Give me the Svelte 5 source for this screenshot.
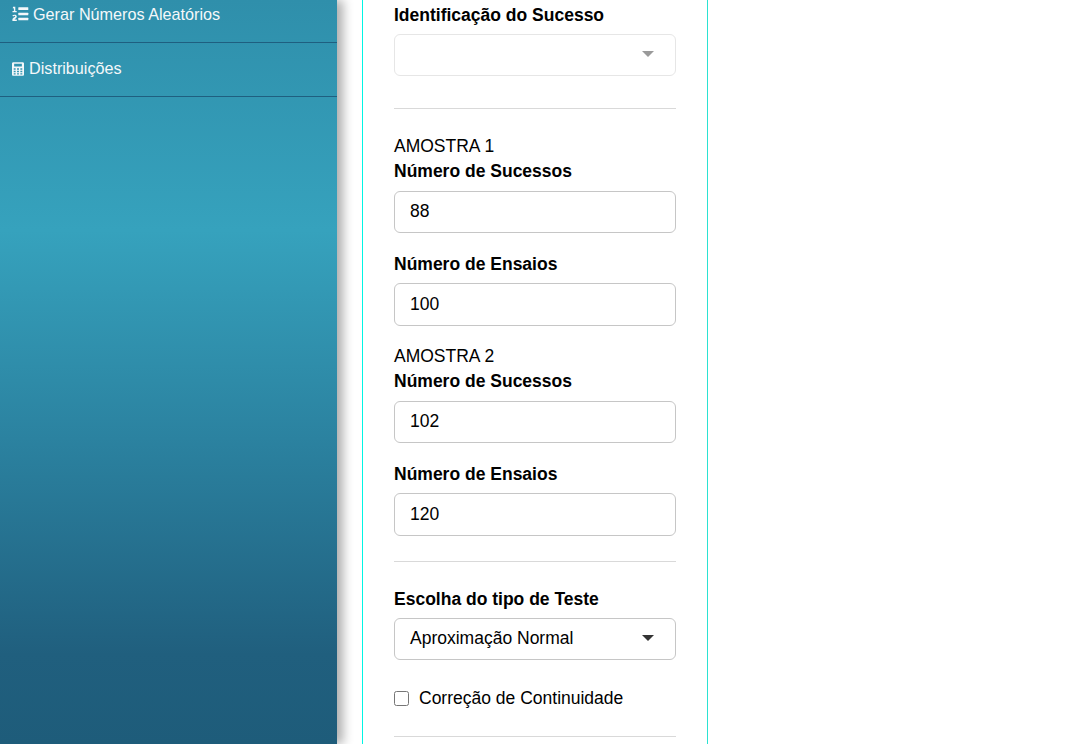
<script>
  const groups = [
    { title: 'AMOSTRA 1', a: '88', b: '100' },
    { title: 'AMOSTRA 2', a: '102', b: '120' }
  ];
</script>

<div class="page">
  <aside class="sidebar">
    <a class="item first" href="#a">
      <svg class="ic-list" viewBox="0 0 17 16" aria-hidden="true">
        <path d="M1 .7h2.300v4.300h1.400v1.300H.5V5h1.400V2.200l-1.100.3zM.4 15v-1.300c0-2 2.800-2.300 2.800-3.400 0-.7-1.100-.7-2.100.2L.3 9.500c1.500-1.300 4.500-1.100 4.500 1 0 1.700-1.700 2-2.300 3.100h2.300V15z"/>
        <rect x="6.300" y="1.300" width="10" height="2.700" rx=".5"/>
        <rect x="6.300" y="6.700" width="10" height="2.600" rx=".5"/>
        <rect x="6.300" y="11.700" width="10" height="2.600" rx=".5"/>
      </svg>
      <span>Gerar Números Aleatórios</span>
    </a>
    <a class="item" href="#b">
      <svg class="ic-calc" viewBox="0 0 448 512" aria-hidden="true">
        <path fill-rule="evenodd" d="M48 0h352c26 0 48 22 48 48v416c0 26-22 48-48 48H48c-26 0-48-22-48-48V48C0 22 22 0 48 0zM80 64v96h288V64zM64 224v56h72v-56zM188 224v56h72v-56zM312 224v56h72v-56zM64 320v56h72v-56zM188 320v56h72v-56zM312 320v56h72v-56zM64 416v48h72v-48zM188 416v48h72v-48zM312 416v48h72v-48z"/>
      </svg>
      <span>Distribuições</span>
    </a>
  </aside>

  <main class="panel">
    <label class="lbl top" for="succ">Identificação do Sucesso</label>
    <div class="select empty" id="succ"><i class="caret"></i></div>
    <hr class="rule one" />

    {#each groups as g, i}
      <div class="group" class:second={i === 1}>
        <div class="title">{g.title}</div>
        <div class="lbl">Número de Sucessos</div>
        <input class="field" value={g.a} aria-label="Número de Sucessos" />
        <div class="lbl next">Número de Ensaios</div>
        <input class="field tall" value={g.b} aria-label="Número de Ensaios" />
      </div>
    {/each}

    <hr class="rule two" />
    <div class="lbl">Escolha do tipo de Teste</div>
    <div class="select"><span>Aproximação Normal</span><i class="caret dark"></i></div>
    <label class="check"><input type="checkbox" /><span>Correção de Continuidade</span></label>
    <hr class="rule three" />
  </main>
</div>

<style>
  :global(body) {
    margin: 0;
    background: #fff;
    overflow: hidden;
  }
  .page {
    display: flex;
    height: 744px;
    overflow: hidden;
    font-family: "Liberation Sans", Arial, sans-serif;
    color: #000;
  }
  .sidebar {
    width: 337px;
    flex: none;
    height: 744px;
    background: linear-gradient(180deg, #2f8fab 0%, #36a2bd 31%, #2b82a0 59%, #205f7e 88%, #1e5c7a 100%);
    box-shadow: 6px 0 10px rgba(0, 0, 0, 0.32);
    position: relative;
  }
  .item {
    display: flex;
    align-items: center;
    gap: 5px;
    padding-bottom: 2px;
    box-sizing: border-box;
    height: 54px;
    padding-left: 12px;
    border-bottom: 1px solid #1f5f80;
    color: #f4f8fa;
    font-size: 16.200px;
    text-decoration: none;
  }
  .item.first {
    height: 43px;
    gap: 4px;
    padding-bottom: 0;
    align-items: flex-start;
  }
  .item.first span { margin-top: 5px; line-height: 18px; }
  .ic-list { width: 17px; height: 16px; fill: #f4f8fa; margin-top: 6px; flex: none; }
  .ic-calc { width: 12px; height: 16px; fill: #f4f8fa; flex: none; }
  .panel {
    width: 281.500px;
    flex: none;
    margin-left: 25px;
    margin-top: -20px;
    padding: 0 31px;
    border-left: 1px solid #00f5e4;
    border-right: 1px solid #2be2d2;
    height: 800px;
    box-sizing: content-box;
  }
  .lbl {
    display: block;
    font-weight: 700;
    font-size: 17.500px;
    line-height: 25px;
  }
  .lbl.top { margin-top: 23px; }
  .select {
    display: flex;
    align-items: center;
    justify-content: space-between;
    box-sizing: border-box;
    height: 42px;
    margin-top: 6px;
    padding: 0 21px 1px 15px;
    border: 1px solid #c6c6c6;
    border-radius: 6px;
    font-size: 17.500px;
  }
  .select.empty { border-color: #e6e6e6; justify-content: flex-end; }
  .caret {
    width: 0;
    height: 0;
    margin-bottom: 2px;
    border-left: 6.500px solid transparent;
    border-right: 6.500px solid transparent;
    border-top: 6px solid #9a9a9a;
  }
  .caret.dark { border-top-color: #333; }
  .rule {
    border: 0;
    border-top: 1px solid #d9d9d9;
    margin: 0;
  }
  .rule.one { margin-top: 32px; }
  .rule.two { margin-top: 25px; margin-bottom: 25px; }
  .rule.three { margin-top: 25px; }
  .group { margin-top: 25px; }
  .group.second { margin-top: 18px; }
  .title { font-size: 17.500px; line-height: 25px; }
  .field {
    display: block;
    box-sizing: border-box;
    width: 100%;
    height: 42px;
    margin: 7px 0 0;
    padding: 0 15px 1px;
    border: 1px solid #c6c6c6;
    border-radius: 6px;
    font: inherit;
    font-size: 17.500px;
    color: #000;
    background: #fff;
    outline: none;
  }
  .field.tall { height: 43px; margin-top: 6px; padding-bottom: 0; }
  .lbl.next { margin-top: 19px; }
  .check {
    display: flex;
    align-items: center;
    gap: 10px;
    margin-top: 26px;
    font-size: 17.500px;
    line-height: 25px;
  }
  .check input { width: 15px; height: 15px; margin: 0; }
</style>
